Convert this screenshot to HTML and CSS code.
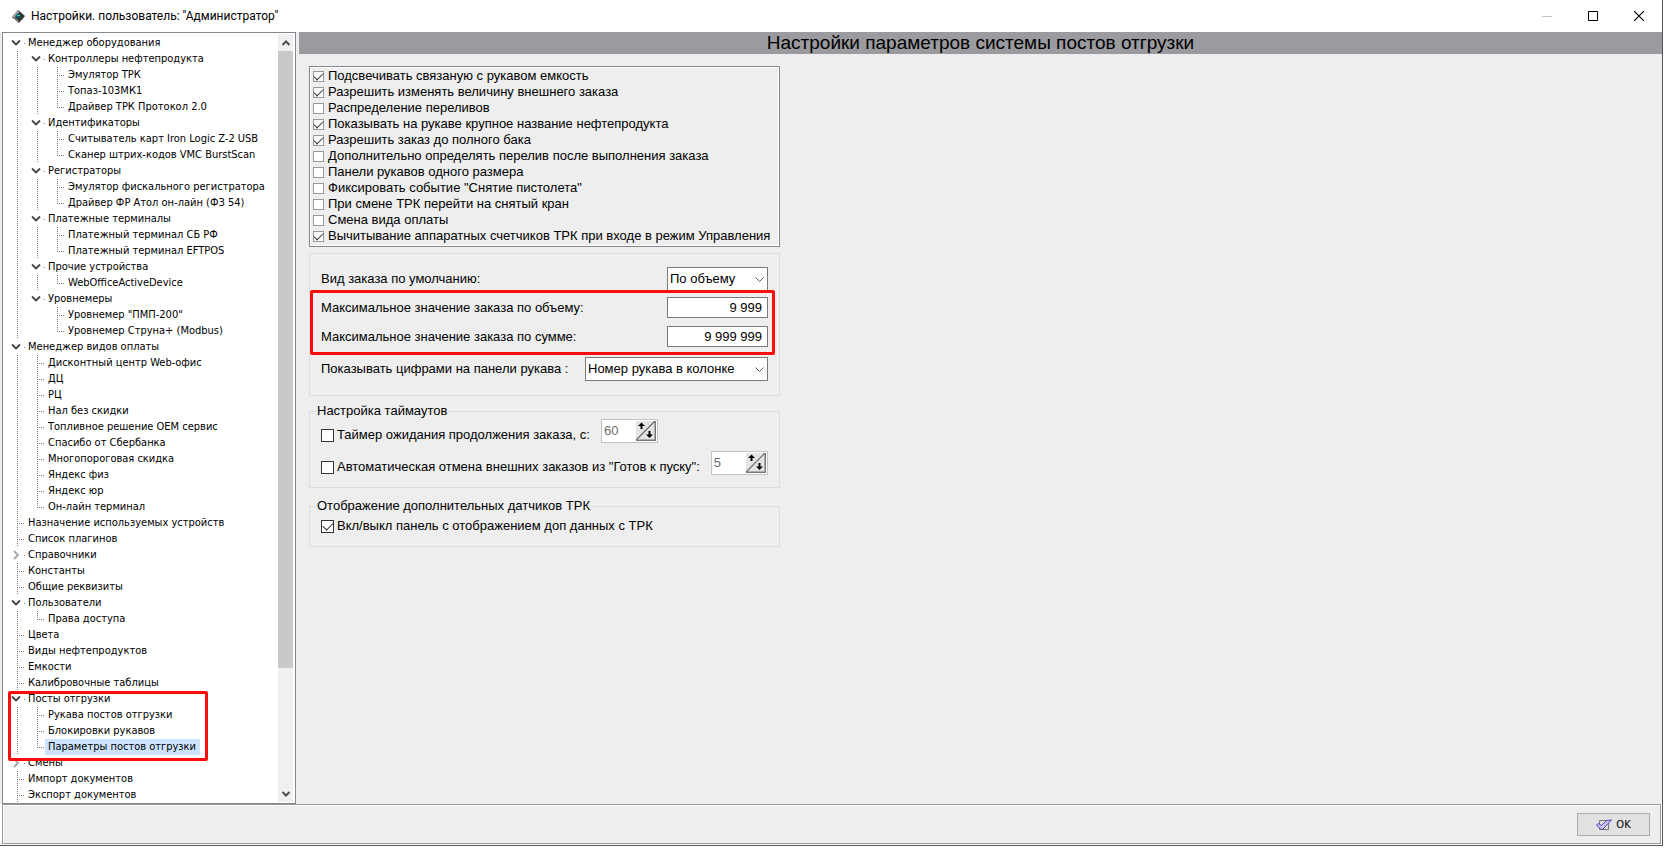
FILE: index.html
```html
<!DOCTYPE html>
<html lang="ru">
<head>
    <meta charset="UTF-8">
    <meta name="viewport" content="width=device-width, initial-scale=1.0">
    <title>Настройки. пользователь: "Администратор"</title>
    <link rel="stylesheet" href="styles.css">
</head>
<body>
    <div class="window">
        <header class="titlebar">
            <svg class="logo" width="15" height="15" viewBox="0 0 15 15">
                <path d="M7 1 L14 7 L8 14 L1 8 Z" fill="#333"/>
                <path d="M7 1 L1 8 L4 8 L8 4 Z" fill="#aaa"/>
                <path d="M1 8 L8 14 L8 12 L4 8 Z" fill="#777"/>
                <path d="M7 4 L10 7 L7 10 L4 7 Z" fill="#0d5a6b"/>
                <path d="M6 6 H9 V7 H6 Z" fill="#3fd0b0"/>
            </svg>
            <span class="title">Настройки. пользователь: "Администратор"</span>
            <div class="window-buttons">
                <button class="window-button" aria-label="Свернуть" disabled>
                    <svg width="10" height="10" viewBox="0 0 10 10"><path d="M0 5.5 H10" stroke="#c4c4c4"/></svg>
                </button>
                <button class="window-button" aria-label="Развернуть">
                    <svg width="10" height="10" viewBox="0 0 10 10"><path d="M.5 .5 H9.5 V9.5 H.5 Z" fill="none" stroke="#000"/></svg>
                </button>
                <button class="window-button" aria-label="Закрыть">
                    <svg width="10" height="10" viewBox="0 0 10 10"><path d="M0 0 L10 10 M10 0 L0 10" stroke="#000" stroke-width="1.2"/></svg>
                </button>
            </div>
        </header>

        <div class="main">
            <nav class="sidebar">
                <ul class="tree" id="tree"></ul>
                <div class="scrollbar">
                    <button class="scroll-button" aria-label="Вверх">
                        <svg width="8" height="6" viewBox="0 0 8 6"><path d="M.5 5 L4 1.5 L7.5 5" fill="none" stroke="#505050" stroke-width="2"/></svg>
                    </button>
                    <div class="track"><div class="thumb"></div></div>
                    <button class="scroll-button" aria-label="Вниз">
                        <svg width="8" height="6" viewBox="0 0 8 6"><path d="M.5 1 L4 4.5 L7.5 1" fill="none" stroke="#505050" stroke-width="2"/></svg>
                    </button>
                </div>
            </nav>

            <main class="content">
                <h1>Настройки параметров системы постов отгрузки</h1>
                <form class="settings">
                    <div class="checklist">
                        <label><input type="checkbox" checked>Подсвечивать связаную с рукавом емкость</label>
                        <label><input type="checkbox" checked>Разрешить изменять величину внешнего заказа</label>
                        <label><input type="checkbox">Распределение переливов</label>
                        <label><input type="checkbox" checked>Показывать на рукаве крупное название нефтепродукта</label>
                        <label><input type="checkbox" checked>Разрешить заказ до полного бака</label>
                        <label><input type="checkbox">Дополнительно определять перелив после выполнения заказа</label>
                        <label><input type="checkbox">Панели рукавов одного размера</label>
                        <label><input type="checkbox">Фиксировать событие "Снятие пистолета"</label>
                        <label><input type="checkbox">При смене ТРК перейти на снятый кран</label>
                        <label><input type="checkbox">Смена вида оплаты</label>
                        <label><input type="checkbox" checked>Вычитывание аппаратных счетчиков ТРК при входе в режим Управления</label>
                    </div>

                    <div class="group order">
                        <div class="field">
                            <label for="order-type">Вид заказа по умолчанию:</label>
                            <div class="select small">
                                <select id="order-type"><option>По объему</option></select>
                                <svg width="9" height="6" viewBox="0 0 9 6"><path d="M.5 .5 L4.5 4.5 L8.5 .5" fill="none" stroke="#555"/></svg>
                            </div>
                        </div>
                        <div class="limits">
                            <div class="field">
                                <label for="max-volume">Максимальное значение заказа по объему:</label>
                                <input class="number" type="text" id="max-volume" value="9 999">
                            </div>
                            <div class="field">
                                <label for="max-sum">Максимальное значение заказа по сумме:</label>
                                <input class="number" type="text" id="max-sum" value="9 999 999">
                            </div>
                        </div>
                        <div class="field">
                            <label for="digits">Показывать цифрами на панели рукава :</label>
                            <div class="select">
                                <select id="digits"><option>Номер рукава в колонке</option></select>
                                <svg width="9" height="6" viewBox="0 0 9 6"><path d="M.5 .5 L4.5 4.5 L8.5 .5" fill="none" stroke="#555"/></svg>
                            </div>
                        </div>
                    </div>

                    <fieldset class="group">
                        <legend>Настройка таймаутов</legend>
                        <div class="timers">
                            <div class="timer">
                                <label class="check"><input type="checkbox">Таймер ожидания продолжения заказа, с:</label>
                                <div class="spinner">
                                    <input type="text" value="60" aria-label="Таймер, с" disabled>
                                    <svg width="20" height="20" viewBox="0 0 20 20">
                                        <path d="M0 0 H20 V20 H0 Z" fill="#e4e4e4"/>
                                        <path d="M0 19.5 H19.5 V0" fill="none" stroke="#777" stroke-width="2"/>
                                        <path d="M0 19 L19 0" stroke="#666" stroke-width="1.2"/>
                                        <path d="M5.5 1.5 L9 5 H6.5 V8 H4.5 V5 H2 Z M13.5 17 L10 13.5 H12.5 V10 H14.5 V13.5 H17 Z" fill="#000"/>
                                    </svg>
                                </div>
                            </div>
                            <div class="timer">
                                <label class="check"><input type="checkbox">Автоматическая отмена внешних заказов из "Готов к пуску":</label>
                                <div class="spinner">
                                    <input type="text" value="5" aria-label="Автоматическая отмена" disabled>
                                    <svg width="20" height="20" viewBox="0 0 20 20">
                                        <path d="M0 0 H20 V20 H0 Z" fill="#e4e4e4"/>
                                        <path d="M0 19.5 H19.5 V0" fill="none" stroke="#777" stroke-width="2"/>
                                        <path d="M0 19 L19 0" stroke="#666" stroke-width="1.2"/>
                                        <path d="M5.5 1.5 L9 5 H6.5 V8 H4.5 V5 H2 Z M13.5 17 L10 13.5 H12.5 V10 H14.5 V13.5 H17 Z" fill="#000"/>
                                    </svg>
                                </div>
                            </div>
                        </div>
                    </fieldset>

                    <fieldset class="group">
                        <legend>Отображение дополнительных датчиков ТРК</legend>
                        <label class="check sensors"><input type="checkbox" checked>Вкл/выкл панель с отображением доп данных с ТРК</label>
                    </fieldset>
                </form>
            </main>
        </div>

        <footer class="footer">
            <button class="ok">
                <svg width="16" height="12" viewBox="0 0 16 12">
                    <path d="M3.5 1.5 H12.5 V10.5 H3.5 Z" fill="none" stroke="#777"/>
                    <path d="M.5 6 L2.5 4.5 L5.5 6.5 L10.5 1.5 L15.5 1 L6.5 10.5 L5 10.5 Z" fill="#c9c4f2" stroke="#4a3fb5"/>
                </svg>
                OK
            </button>
        </footer>
    </div>
    <script src="tree.js"></script>
</body>
</html>
```
FILE: styles.css
```css
*,
*::after {
    box-sizing: border-box;
}

body {
    margin: 0;
    background-color: #fff;
    color: #000;
    font-family: "Liberation Sans", Arial, sans-serif;
    font-size: 13px;
    line-height: 16px;
}

button,
input,
select {
    font: inherit;
    color: inherit;
}

.window {
    display: flex;
    flex-direction: column;
    height: calc(100vh - 2px);
    margin-right: 2px;
    border-right: 1px solid #555;
    border-bottom: 1px solid #555;
}

/* title bar */

.titlebar {
    display: flex;
    align-items: center;
    height: 32px;
    padding-left: 11px;
    background-color: #fff;
    font-family: Roboto, sans-serif;
    font-size: 12px;
}

.title {
    margin-left: 5px;
}

.window-buttons {
    display: flex;
    margin-left: auto;
}

.window-button {
    display: flex;
    align-items: center;
    justify-content: center;
    width: 46px;
    height: 32px;
    padding: 0;
    border: none;
    background: none;
}

.main {
    display: flex;
    flex: 1;
    min-height: 0;
    background-color: #eee;
}

/* tree */

.sidebar {
    display: flex;
    width: 294px;
    margin: 0 3px 0 2px;
    padding: 1px 2px 1px 1px;
    border: 1px solid #828790;
    background-color: #fff;
}

.tree {
    flex: 1;
    padding: 1px 0 0 4px;
    overflow: hidden;
    font-family: "DejaVu Sans Condensed", Tahoma, sans-serif;
    font-size: 11px;
}

.tree,
.tree ul {
    margin: 0;
    list-style: none;
}

.tree ul {
    padding-left: 20px;
}

.tree li {
    position: relative;
    background: repeating-linear-gradient(#808080 0 1px, transparent 1px 2px) 9px 0 / 1px 100% no-repeat;
}

.tree ul > li:last-child {
    background-size: 1px 8px;
}

.row {
    display: flex;
    align-items: center;
    height: 16px;
    white-space: nowrap;
}

.row a {
    padding: 0 4px 0 3px;
    color: #000;
    text-decoration: none;
}

.row a.selected {
    background-color: #cce4ff;
}

.stub {
    width: 17px;
    height: 1px;
    background: repeating-linear-gradient(90deg, #808080 0 1px, transparent 1px 2px) 9px 0 / 8px 1px no-repeat;
}

.toggle {
    display: flex;
    align-items: center;
    width: 17px;
    height: 16px;
    padding: 0 0 0 3px;
    border: none;
    background: linear-gradient(#808080, #808080) 16px 8px / 1px 1px no-repeat #fff;
}

.marked::after {
    content: "";
    position: absolute;
    z-index: 1;
    top: 0;
    left: 0;
    width: 200px;
    height: 70px;
    border: 3px solid #f90d0d;
    border-radius: 2px;
}

.scrollbar {
    display: flex;
    flex-direction: column;
    width: 15px;
    background-color: #f0f0f0;
}

.scroll-button {
    display: flex;
    align-items: center;
    justify-content: center;
    height: 17px;
    padding: 0;
    border: none;
    background: none;
}

.track {
    flex: 1;
}

.thumb {
    height: 84%;
    background-color: #c9c9c9;
}

/* settings */

.content {
    flex: 1;
}

h1 {
    margin: 0;
    background-color: #9b9a9f;
    font-size: 19px;
    font-weight: normal;
    line-height: 22px;
    text-align: center;
}

.settings {
    width: 471px;
    margin: 12px 10px;
}

.checklist {
    padding: 1px 3px 2px;
    border: 1px solid #828790;
    box-shadow: inset 0 0 0 1px #fff;
}

.checklist label,
.check {
    display: flex;
    align-items: center;
    white-space: nowrap;
}

input[type="checkbox"] {
    flex: none;
    appearance: none;
    width: 13px;
    height: 13px;
    margin: 0 3px 0 0;
    border: 1px solid #333;
    background-color: #fff;
}

input[type="checkbox"]:checked::after {
    content: "";
    display: block;
    width: 10px;
    height: 6px;
    margin: 1px;
    border-left: 1px solid #333;
    border-bottom: 1px solid #333;
    transform: rotate(-45deg);
}

.checklist input[type="checkbox"] {
    width: 11px;
    height: 11px;
    margin-right: 4px;
    border-color: #999;
}

.checklist input[type="checkbox"]:checked::after {
    width: 9px;
    height: 5px;
    margin: 1px 0;
}

.group {
    margin: 0;
    padding: 0 11px;
    border: 1px solid #dcdcdc;
}

.group + .group {
    margin-top: 10px;
}

.order {
    margin-top: 6px;
    padding-top: 13px;
    padding-bottom: 14px;
}

.order + .group {
    margin-top: 7px;
}

.field {
    display: flex;
    align-items: center;
    justify-content: space-between;
}

.limits {
    position: relative;
    display: flex;
    flex-direction: column;
    gap: 8px;
    padding: 6px 0 10px;
}

.limits::after {
    content: "";
    position: absolute;
    inset: -1px -7px 2px -11px;
    border: 3px solid #f90d0d;
    border-radius: 2px;
    pointer-events: none;
}

.number {
    width: 101px;
    height: 21px;
    padding: 0 5px;
    border: 1px solid #7a7a7a;
    background-color: #fff;
    text-align: right;
}

.select {
    position: relative;
    width: 183px;
}

.select.small {
    width: 101px;
}

.select select {
    display: block;
    appearance: none;
    width: 100%;
    height: 24px;
    padding: 0 2px;
    border: 1px solid #7a7a7a;
    border-radius: 0;
    background-color: #fff;
}

.select svg {
    position: absolute;
    top: 10px;
    right: 4px;
    pointer-events: none;
}

legend {
    margin-left: -5px;
    padding: 0 1px;
}

.timers {
    display: flex;
    flex-direction: column;
    gap: 8px;
    padding-bottom: 12px;
}

.timer {
    display: flex;
    align-items: flex-end;
    gap: 11px;
}

.spinner {
    display: flex;
    width: 57px;
    height: 24px;
    padding: 1px;
    border: 1px solid #c4c4c4;
    background-color: #fff;
}

.spinner input {
    flex: 1;
    width: 0;
    height: 18px;
    padding: 0 1px;
    border: none;
    background: none;
    color: #6d6d6d;
}

.sensors {
    padding: 4px 0 12px;
}

/* footer */

.footer {
    display: flex;
    justify-content: flex-end;
    height: 40px;
    margin: 0 1px 1px 2px;
    padding: 8px 10px;
    border: 1px solid #999;
    background-color: #eee;
    box-shadow: inset 1px 1px 0 #fff;
}

.ok {
    display: flex;
    align-items: center;
    justify-content: center;
    gap: 4px;
    width: 73px;
    height: 23px;
    padding: 0;
    border: 1px solid #adadad;
    background-color: #e1e1e1;
    font-family: "DejaVu Sans Condensed", Tahoma, sans-serif;
    font-size: 11px;
}
```
FILE: tree.js
```javascript
const items = [
    { name: 'Менеджер оборудования', children: [
        { name: 'Контроллеры нефтепродукта', children: [
            { name: 'Эмулятор ТРК' },
            { name: 'Топаз-103МК1' },
            { name: 'Драйвер ТРК Протокол 2.0' }
        ] },
        { name: 'Идентификаторы', children: [
            { name: 'Считыватель карт Iron Logic Z-2 USB' },
            { name: 'Сканер штрих-кодов VMC BurstScan' }
        ] },
        { name: 'Регистраторы', children: [
            { name: 'Эмулятор фискального регистратора' },
            { name: 'Драйвер ФР Атол он-лайн (ФЗ 54)' }
        ] },
        { name: 'Платежные терминалы', children: [
            { name: 'Платежный терминал СБ РФ' },
            { name: 'Платежный терминал EFTPOS' }
        ] },
        { name: 'Прочие устройства', children: [
            { name: 'WebOfficeActiveDevice' }
        ] },
        { name: 'Уровнемеры', children: [
            { name: 'Уровнемер "ПМП-200"' },
            { name: 'Уровнемер Струна+ (Modbus)' }
        ] }
    ] },
    { name: 'Менеджер видов оплаты', children: [
        { name: 'Дисконтный центр Web-офис' },
        { name: 'ДЦ' },
        { name: 'РЦ' },
        { name: 'Нал без скидки' },
        { name: 'Топливное решение ОЕМ сервис' },
        { name: 'Спасибо от Сбербанка' },
        { name: 'Многопороговая скидка' },
        { name: 'Яндекс физ' },
        { name: 'Яндекс юр' },
        { name: 'Он-лайн терминал' }
    ] },
    { name: 'Назначение используемых устройств' },
    { name: 'Список плагинов' },
    { name: 'Справочники', closed: true },
    { name: 'Константы' },
    { name: 'Общие реквизиты' },
    { name: 'Пользователи', children: [
        { name: 'Права доступа' }
    ] },
    { name: 'Цвета' },
    { name: 'Виды нефтепродуктов' },
    { name: 'Емкости' },
    { name: 'Калибровочные таблицы' },
    { name: 'Посты отгрузки', marked: true, children: [
        { name: 'Рукава постов отгрузки' },
        { name: 'Блокировки рукавов' },
        { name: 'Параметры постов отгрузки', selected: true }
    ] },
    { name: 'Смены', closed: true },
    { name: 'Импорт документов' },
    { name: 'Экспорт документов' }
];

const openIcon = '<svg width="10" height="6" viewBox="0 0 10 6"><path d="M1 .5 L5 4.5 L9 .5" fill="none" stroke="#404040" stroke-width="1.8"/></svg>';
const closedIcon = '<svg width="10" height="10" viewBox="0 0 10 10"><path d="M3 1 L7 5 L3 9" fill="none" stroke="#a6a6a6" stroke-width="1.8"/></svg>';

function addItems(list, nodes) {
    nodes.forEach(node => {
        const li = document.createElement('li');
        const row = document.createElement('div');
        row.className = 'row';

        if (node.children || node.closed) {
            const toggle = document.createElement('button');
            toggle.className = 'toggle';
            toggle.setAttribute('aria-label', node.name);
            toggle.innerHTML = node.closed ? closedIcon : openIcon;
            row.appendChild(toggle);
        } else {
            const stub = document.createElement('span');
            stub.className = 'stub';
            row.appendChild(stub);
        }

        const link = document.createElement('a');
        link.href = '#';
        link.textContent = node.name;
        if (node.selected) link.className = 'selected';
        row.appendChild(link);
        li.appendChild(row);

        if (node.marked) li.className = 'marked';
        if (node.children) {
            const ul = document.createElement('ul');
            addItems(ul, node.children);
            li.appendChild(ul);
        }
        list.appendChild(li);
    });
}

addItems(document.getElementById('tree'), items);
```
